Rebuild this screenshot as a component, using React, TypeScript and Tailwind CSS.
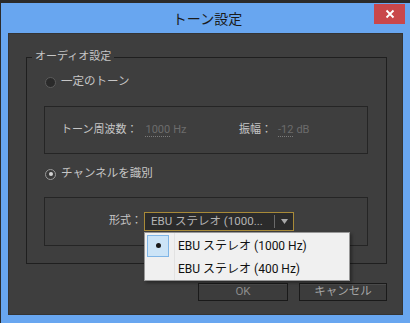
import React from "react";

const FONT = { fontFamily: '"Roboto", "Noto Sans CJK JP", sans-serif' };

function Radio({ checked }: { checked?: boolean }) {
  return (
    <div
      className={
        "w-[11px] h-[11px] rounded-full border flex items-center justify-center " +
        (checked
          ? "border-[#9a9a9a] bg-[#3a3a3a]"
          : "border-[#5c5c5c] bg-[#2a2a2a]")
      }
    >
      {checked ? <div className="w-[4px] h-[4px] rounded-full bg-[#d4d4d4]" /> : null}
    </div>
  );
}

export default function App() {
  return (
    <div
      className="w-[410px] h-[323px] bg-[#2b2b2b] pt-[3px] pl-[1px] overflow-hidden"
      style={FONT}
    >
      <div className="w-[409px] h-[320px] bg-[#68a6f0] flex flex-col px-[7px] pb-[8px]">
        {/* Title bar */}
        <div className="relative h-[30px] shrink-0 flex items-center justify-center">
          <span className="text-[14px] text-[#1b1b1b] leading-none mt-[2px] ml-[4px]">
            トーン設定
          </span>
          <div className="absolute right-[-2px] top-[1px] w-[31px] h-[20px] bg-[#c9474b] flex items-center justify-center">
            <svg width="10" height="10" viewBox="0 0 10 10">
              <path d="M1.5 1.5 L8.5 8.5 M8.5 1.5 L1.5 8.5" stroke="#ffffff" strokeWidth="1.8" />
            </svg>
          </div>
        </div>

        {/* Content */}
        <div className="flex-1 bg-[#3e3e3e] pl-[17px] pr-[15px] flex flex-col border border-[#343434]">
          <fieldset className="mt-[15px] border border-[#1f1f1f] pb-[17px]">
            <legend className="ml-[5px] px-[3px] text-[11px] leading-[16px] text-[#c6c6c6]">
              オーディオ設定
            </legend>

            <div className="mt-[9px] pl-[18px] h-[16px] flex items-center gap-[5px]">
              <Radio />
              <span className="text-[11.5px] text-[#c6c6c6]">一定のトーン</span>
            </div>

            <div className="mt-[16px] ml-[17px] mr-[18px] h-[48px] border border-[#252525] flex items-center pl-[16px] text-[11px]">
              <div className="w-[178px] flex items-center">
                <span className="text-[#c6c6c6]">トーン周波数：</span>
                <span className="ml-[8px] text-[#6c6c6c] border-b border-dotted border-[#7a7a7a] leading-[13px]">
                  1000
                </span>
                <span className="ml-[3px] text-[#6c6c6c]">Hz</span>
              </div>
              <span className="text-[#c6c6c6]">振幅：</span>
              <span className="ml-[6px] text-[#6c6c6c] border-b border-dotted border-[#7a7a7a] leading-[13px]">
                -12
              </span>
              <span className="ml-[3px] text-[#6c6c6c]">dB</span>
            </div>

            <div className="mt-[12px] pl-[18px] h-[16px] flex items-center gap-[5px]">
              <Radio checked />
              <span className="text-[11.5px] text-[#c6c6c6]">チャンネルを識別</span>
            </div>

            <div className="mt-[15px] ml-[17px] mr-[18px] h-[49px] border border-[#252525] flex items-center pl-[64px] text-[11px]">
              <span className="text-[#c6c6c6]">形式：</span>
              <div className="relative ml-[2px] w-[150px] h-[19px] border border-[#a88a38] bg-[#2b2b2b] flex items-center">
                <span className="pl-[6px] w-[129px] text-[11.5px] text-[#b4b4b4] whitespace-nowrap overflow-hidden">
                  EBU ステレオ (1000...
                </span>
                <div className="h-[13px] w-[1px] bg-[#6a6a6a]" />
                <div className="flex-1 flex items-center justify-center">
                  <svg width="7" height="5" viewBox="0 0 7 5">
                    <path d="M0 0 L7 0 L3.5 5 Z" fill="#a8a8a8" />
                  </svg>
                </div>

                {/* Dropdown menu */}
                <div className="absolute left-[-1px] top-[19px] w-[206px] h-[49px] bg-[#f0f0f0] border border-[#979797] shadow-[2px_2px_3px_rgba(0,0,0,0.35)] pt-[1px] z-10">
                  <div className="absolute left-[29px] top-0 bottom-0 w-[1px] bg-[#e2e2e2]" />
                  <div className="h-[23px] flex items-center pl-[2px]">
                    <div className="w-[22px] h-[22px] bg-[#cce4f7] border border-[#7fb5e6] flex items-center justify-center">
                      <div className="w-[5px] h-[5px] rounded-full bg-[#1a1a1a]" />
                    </div>
                    <span className="ml-[9px] text-[12px] text-[#111] whitespace-nowrap">
                      EBU ステレオ (1000 Hz)
                    </span>
                  </div>
                  <div className="h-[23px] flex items-center pl-[33px]">
                    <span className="text-[12px] text-[#111] whitespace-nowrap">
                      EBU ステレオ (400 Hz)
                    </span>
                  </div>
                </div>
              </div>
            </div>
          </fieldset>

          <div className="mt-[19px] flex justify-end gap-[11px]">
            <div className="w-[90px] h-[18px] bg-[#3c3c3c] border border-[#1a1a1a] shadow-[inset_0_1px_0_#4a4a4a] flex items-center justify-center text-[11.5px] text-[#8c8c8c]">
              OK
            </div>
            <div className="w-[88px] h-[18px] bg-[#3c3c3c] border border-[#1a1a1a] shadow-[inset_0_1px_0_#4a4a4a] flex items-center justify-center text-[11.5px] text-[#a6a6a6]">
              キャンセル
            </div>
          </div>
        </div>
      </div>
    </div>
  );
}
